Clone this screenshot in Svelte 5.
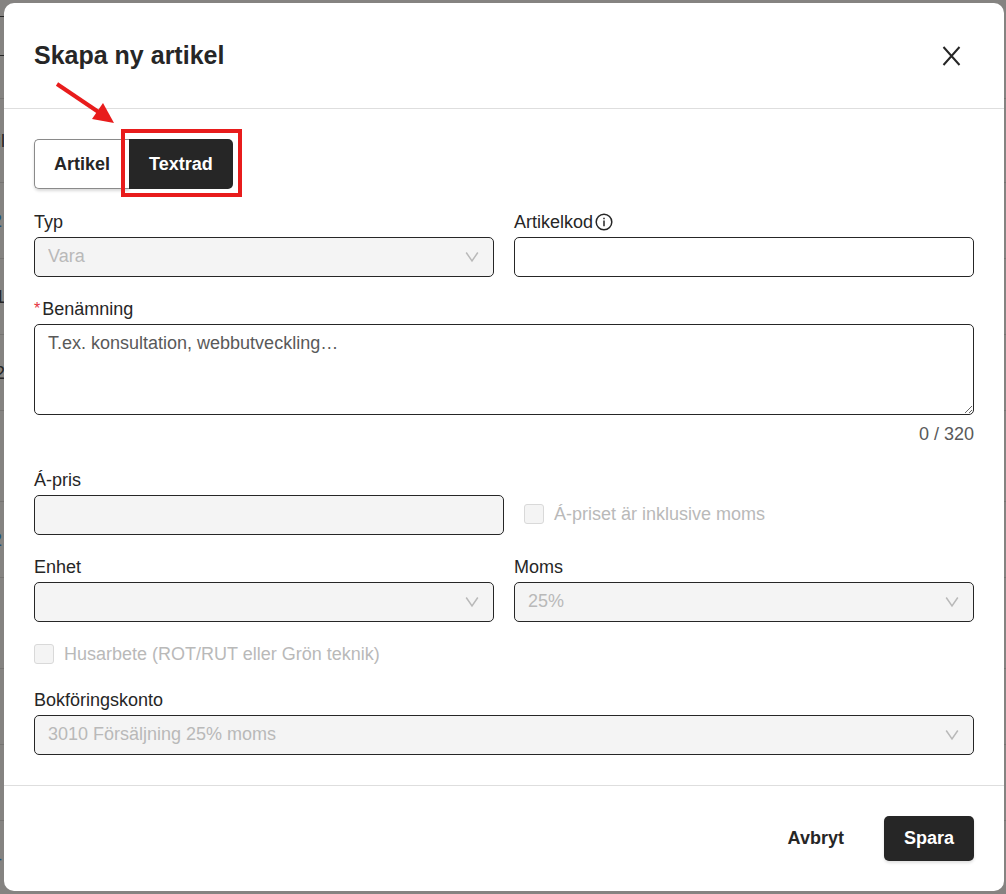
<script>
  let activeTab = $state('Textrad');
  let code = $state('');
  let description = $state('');

  const tabs = ['Artikel', 'Textrad'];
  const maxLength = 320;

  // Rows of the article list behind the dialog
  const rows = [
    { height: 17, text: '', dark: true },
    { height: 39, text: '', dark: true },
    { height: 43, text: '' },
    { height: 84, text: 'il' },
    { height: 76, text: '2', link: true },
    { height: 76, text: '1' },
    { height: 76, text: '2' },
    { height: 91, text: '' },
    { height: 76, text: '2', link: true },
    { height: 91, text: '' },
    { height: 76, text: '' },
    { height: 76, text: '' },
    { height: 76, text: '-', link: true },
  ];
</script>

{#snippet chevron()}
  <svg class="chevron" viewBox="0 0 14 14" aria-hidden="true">
    <path d="M1.2 2.5 L7 11 L12.8 2.5" />
  </svg>
{/snippet}

<div class="page">
  <div class="backdrop" aria-hidden="true">
    {#each rows as row}
      <div class="row" class:dark={row.dark} style="height: {row.height}px">
        <span class:link={row.link}>{row.text}</span>
      </div>
    {/each}
  </div>

  <div class="modal" role="dialog" aria-labelledby="modal-title">
    <header>
      <h1 id="modal-title">Skapa ny artikel</h1>
      <button class="close" type="button" aria-label="Stäng">
        <svg viewBox="0 0 20 20"><path d="M1.5 1 L17.5 19 M17.5 1 L1.5 19" /></svg>
      </button>
    </header>

    <form>
      <div class="tabs">
        {#each tabs as tab}
          <button type="button" class:active={activeTab === tab} onclick={() => (activeTab = tab)}>
            {tab}
          </button>
        {/each}
        <svg class="arrow" viewBox="0 0 62 44" aria-hidden="true">
          <path class="shaft" d="M3 4 L46 33" />
          <path class="head" d="M49 23 L60 43 L38 39 Z" />
        </svg>
        <div class="highlight"></div>
      </div>

      <div class="columns">
        <div class="field">
          <label for="type">Typ</label>
          <div class="select">
            <select id="type" disabled><option>Vara</option></select>
            {@render chevron()}
          </div>
        </div>
        <div class="field">
          <label for="code">
            Artikelkod
            <svg class="info" viewBox="0 0 18 18" aria-hidden="true">
              <circle cx="9" cy="9" r="7.8" />
              <path d="M9 7.6 V13.2 M9 4.8 V6.2" />
            </svg>
          </label>
          <input id="code" type="text" bind:value={code} />
        </div>
      </div>

      <div class="field">
        <label for="description"><span class="required">*</span>Benämning</label>
        <textarea
          id="description"
          maxlength={maxLength}
          placeholder="T.ex. konsultation, webbutveckling…"
          bind:value={description}
        ></textarea>
        <div class="count">{description.length} / {maxLength}</div>
      </div>

      <div class="price">
        <div class="field">
          <label for="price">Á-pris</label>
          <input id="price" type="text" disabled />
        </div>
        <label class="check">
          <input type="checkbox" disabled />
          Á-priset är inklusive moms
        </label>
      </div>

      <div class="columns">
        <div class="field">
          <label for="unit">Enhet</label>
          <div class="select">
            <select id="unit" disabled><option></option></select>
            {@render chevron()}
          </div>
        </div>
        <div class="field">
          <label for="vat">Moms</label>
          <div class="select">
            <select id="vat" disabled><option>25%</option></select>
            {@render chevron()}
          </div>
        </div>
      </div>

      <label class="check housework">
        <input type="checkbox" disabled />
        Husarbete (ROT/RUT eller Grön teknik)
      </label>

      <div class="field">
        <label for="account">Bokföringskonto</label>
        <div class="select">
          <select id="account" disabled><option>3010 Försäljning 25% moms</option></select>
          {@render chevron()}
        </div>
      </div>
    </form>

    <footer>
      <button class="cancel" type="button">Avbryt</button>
      <button class="save" type="button">Spara</button>
    </footer>
  </div>
</div>

<style>
  :global(body) {
    background: #858381;
  }

  .page {
    position: relative;
    min-height: 100vh;
    box-sizing: border-box;
    padding: 3px 2px 3px 4px;
    overflow: hidden;
    font-family: Arial, "Liberation Sans", sans-serif;
    font-size: 18px;
    line-height: 24px;
    color: #262626;
  }

  .page * {
    box-sizing: border-box;
  }

  .backdrop {
    position: absolute;
    inset: 0;
  }
  .row {
    display: flex;
    align-items: center;
    border-bottom: 1px solid #767472;
  }
  .row.dark {
    width: 50%;
    border-color: #262626;
  }
  .row span {
    width: 5px;
    display: flex;
    justify-content: flex-end;
  }
  .row .link {
    width: 2px;
    color: #1d4f7c;
  }

  .modal {
    position: relative;
    background: #fff;
    border-radius: 10px;
  }

  header {
    display: flex;
    align-items: center;
    justify-content: space-between;
    padding: 30px;
    border-bottom: 1px solid #dedede;
  }
  h1 {
    margin: 0;
    font-size: 25px;
    line-height: 45px;
  }

  button {
    font: inherit;
    font-weight: bold;
    color: inherit;
    cursor: pointer;
  }

  .close {
    display: flex;
    padding: 12px;
    border: none;
    background: none;
  }
  .close svg {
    width: 20px;
    height: 20px;
    fill: none;
    stroke: #262626;
    stroke-width: 2;
  }

  form {
    display: flex;
    flex-direction: column;
    gap: 20px;
    padding: 30px;
  }

  .tabs {
    position: relative;
    display: flex;
    align-self: flex-start;
    margin-bottom: 1px;
  }
  .tabs button {
    height: 50px;
    padding: 0 19px;
    border: 1px solid #8a8a8a;
    border-right: none;
    border-radius: 5px 0 0 5px;
    background: #fff;
    box-shadow: 0 2px 3px rgba(0, 0, 0, 0.15);
  }
  .tabs button.active {
    padding: 0 20px;
    border: none;
    border-radius: 0 5px 5px 0;
    background: #262626;
    color: #fff;
    box-shadow: none;
  }

  /* Guide marks drawn over the tab switch */
  .highlight {
    position: absolute;
    inset: -10px -9px -8px 87px;
    border: 4px solid #e81c1c;
    pointer-events: none;
  }
  .arrow {
    position: absolute;
    left: 20px;
    top: -59px;
    width: 62px;
    height: 44px;
    pointer-events: none;
  }
  .shaft {
    stroke: #e81c1c;
    stroke-width: 4;
  }
  .head { fill: #e81c1c; }

  .columns {
    display: grid;
    grid-template-columns: 1fr 1fr;
    gap: 20px;
  }

  .field {
    display: flex;
    flex-direction: column;
    gap: 3px;
  }
  .field label {
    display: flex;
    align-items: center;
    gap: 2px;
  }
  .required {
    color: #e5343d;
    font-size: 16px;
  }
  .info {
    width: 18px;
    height: 18px;
    fill: none;
    stroke: #262626;
    stroke-width: 1.5;
  }

  input[type='text'],
  select,
  textarea {
    width: 100%;
    height: 40px;
    margin: 0;
    padding: 0 13px;
    border: 1px solid #262626;
    border-radius: 5px;
    background: #fff;
    color: #262626;
    font: inherit;
  }
  textarea {
    display: block;
    height: 91px;
    padding: 6px 13px;
    resize: vertical;
  }
  textarea::placeholder { color: #595959; }

  input[type='text']:disabled,
  select:disabled {
    background: #f4f4f4;
    color: #b9b9b9;
    opacity: 1;
  }

  .select { position: relative; }
  select {
    display: block;
    appearance: none;
    padding-bottom: 2px;
  }
  .chevron {
    position: absolute;
    right: 15px;
    top: 13px;
    width: 14px;
    height: 14px;
    fill: none;
    stroke: #b9b9b9;
    stroke-width: 1.5;
    pointer-events: none;
  }

  .count {
    margin-top: 3px;
    line-height: 27px;
    text-align: right;
    color: #595959;
  }

  .price {
    display: flex;
    align-items: flex-end;
    gap: 20px;
  }
  .price .field { width: 50%; }
  .price .check {
    height: 40px;
    padding-bottom: 2px;
  }

  .check {
    display: flex;
    align-items: center;
    gap: 10px;
    color: #b9b9b9;
  }
  .check input {
    appearance: none;
    width: 20px;
    height: 20px;
    margin: 0;
    border: 1px solid #d9d9d9;
    border-radius: 3px;
    background: #f4f4f4;
  }
  .housework { margin-bottom: 2px; }

  footer {
    display: flex;
    justify-content: flex-end;
    gap: 20px;
    padding: 30px;
    border-top: 1px solid #dedede;
  }
  footer button {
    height: 45px;
    padding: 0 20px 2px;
    border: none;
    border-radius: 5px;
    background: none;
  }
  footer .save {
    background: #262626;
    color: #fff;
    box-shadow: 0 2px 3px rgba(0, 0, 0, 0.12);
  }
</style>
